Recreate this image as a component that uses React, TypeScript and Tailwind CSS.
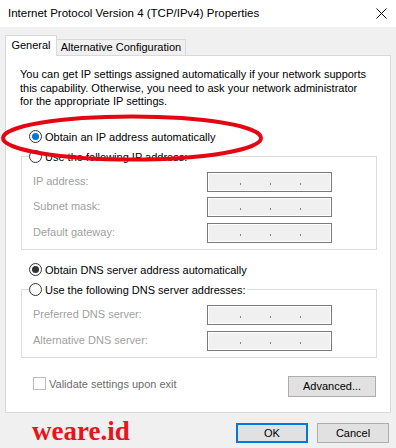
import React from "react";

function Radio({ checked, blue, label, disabled }: { checked?: boolean; blue?: boolean; label: string; disabled?: boolean }) {
  return (
    <div className="flex items-center h-[14px] bg-white pr-[1px]">
      <div className="w-[13px] h-[13px] rounded-full border border-[#333333] bg-white flex items-center justify-center">
        {checked ? (
          <div className={blue ? "w-[7px] h-[7px] rounded-full bg-[#0078d7]" : "w-[7px] h-[7px] rounded-full bg-[#333333]"} />
        ) : null}
      </div>
      <span className={disabled ? "ml-[3px] text-[#a0a0a0] leading-[14px] whitespace-nowrap" : "ml-[3px] text-black leading-[14px] whitespace-nowrap"}>{label}</span>
    </div>
  );
}

function IpField() {
  return (
    <div className="w-[125px] h-[20px] border border-[#7a7a7a] bg-[#f0f0f0] shadow-[inset_0_0_0_1px_#ffffff] flex items-start pt-[10px] pl-[32px]">
      <div className="w-[1px] h-[2px] bg-[#8080a0]" />
      <div className="w-[1px] h-[2px] bg-[#8080a0] ml-[29px]" />
      <div className="w-[1px] h-[2px] bg-[#8080a0] ml-[29px]" />
    </div>
  );
}

function FieldRow({ label, className }: { label: string; className?: string }) {
  return (
    <div className={"flex items-center " + (className ?? "")}>
      <span className="w-[174px] text-[#a0a0a0] whitespace-nowrap">{label}</span>
      <IpField />
    </div>
  );
}

export default function App() {
  return (
    <div className="relative w-[396px] h-[448px] bg-[#f0f0f0] overflow-hidden font-['Liberation_Sans',Arial,sans-serif] text-[11px] text-black">
      {/* Title bar */}
      <div className="h-[27px] bg-white flex items-center justify-between pl-[8px] pr-[9px]">
        <span className="text-[11.5px] whitespace-nowrap">Internet Protocol Version 4 (TCP/IPv4) Properties</span>
        <svg width="11" height="11" viewBox="0 0 11 11">
          <path d="M0.5 0.5 L10.5 10.5 M10.5 0.5 L0.5 10.5" stroke="#000" strokeWidth="1" />
        </svg>
      </div>

      {/* Tabs */}
      <div className="flex items-start pl-[5px] mt-[8px] h-[20px]">
        <div className="relative z-10 w-[52px] h-[21px] bg-white border border-b-0 border-[#d9d9d9] flex items-center justify-center pb-[2px]">
          <span>General</span>
        </div>
        <div className="w-[129px] h-[16px] mt-[4px] bg-[#f0f0f0] border border-l-0 border-b-0 border-[#d9d9d9] flex items-center justify-center">
          <span className="whitespace-nowrap">Alternative Configuration</span>
        </div>
      </div>

      {/* Panel */}
      <div className="ml-[5px] w-[386px] h-[358px] bg-white border border-[#d9d9d9] flex flex-col">
        <p className="mt-[12px] ml-[14px] leading-[13.5px] whitespace-nowrap">
          You can get IP settings assigned automatically if your network supports
          <br />
          this capability. Otherwise, you need to ask your network administrator
          <br />
          for the appropriate IP settings.
        </p>

        <div className="mt-[21px] ml-[23px] flex">
          <Radio checked blue label="Obtain an IP address automatically" />
        </div>

        <fieldset className="mt-[6px] ml-[15px] w-[356px] border border-[#dcdcdc] px-0 pt-0 pb-[6px]">
          <legend className="ml-[7px] p-0">
            <Radio label="Use the following IP address:" />
          </legend>
          <div className="pl-[11px] pt-[8px] flex flex-col">
            <FieldRow label="IP address:" />
            <FieldRow label="Subnet mask:" className="mt-[5px]" />
            <FieldRow label="Default gateway:" className="mt-[6px]" />
          </div>
        </fieldset>

        <div className="mt-[13px] ml-[23px] flex">
          <Radio checked label="Obtain DNS server address automatically" />
        </div>

        <fieldset className="mt-[6px] ml-[15px] w-[356px] border border-[#dcdcdc] px-0 pt-0 pb-[6px]">
          <legend className="ml-[7px] p-0">
            <Radio label="Use the following DNS server addresses:" />
          </legend>
          <div className="pl-[11px] pt-[8px] flex flex-col">
            <FieldRow label="Preferred DNS server:" />
            <FieldRow label="Alternative DNS server:" className="mt-[6px]" />
          </div>
        </fieldset>

        <div className="mt-[18px] flex items-start">
          <div className="ml-[27px] flex items-center">
            <div className="w-[13px] h-[13px] border border-[#bcbcbc] bg-white" />
            <span className="ml-[3px] text-[#6d6d6d] whitespace-nowrap">Validate settings upon exit</span>
          </div>
          <button className="ml-auto mr-[14px] w-[88px] h-[21px] bg-[#e1e1e1] border border-[#adadad] text-black flex items-center justify-center">
            Advanced...
          </button>
        </div>
      </div>

      {/* Bottom */}
      <div className="flex items-start mt-[10px]">
        <span className="ml-[32px] -mt-[5px] font-['Liberation_Serif',serif] font-bold text-[27px] leading-[27px] text-[#e8141c]">weare.id</span>
        <button className="ml-auto w-[72px] h-[20px] bg-[#e1e1e1] border-2 border-[#0078d7] flex items-center justify-center">OK</button>
        <button className="ml-[9px] mr-[7px] w-[72px] h-[20px] bg-[#e1e1e1] border border-[#adadad] flex items-center justify-center">Cancel</button>
      </div>

      {/* Red hand-drawn ellipse */}
      <svg className="absolute left-0 top-[113px] pointer-events-none" width="266" height="52" viewBox="0 0 266 52">
        <ellipse cx="132" cy="25" rx="129" ry="21.5" fill="none" stroke="#e30613" strokeWidth="4" />
      </svg>
    </div>
  );
}
